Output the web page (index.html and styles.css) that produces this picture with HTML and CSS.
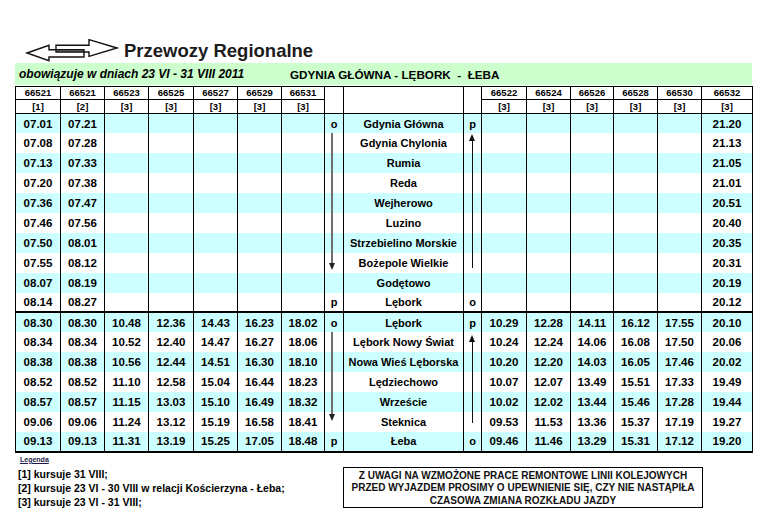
FILE: index.html
```html
<!DOCTYPE html>
<html lang="pl">
<head>
<meta charset="utf-8">
<title>Rozkład jazdy Gdynia Główna - Lębork - Łeba</title>
<link rel="stylesheet" href="styles.css">
</head>
<body>
<div class="page">
  <header class="brand">
    <svg class="logo" width="96" height="24" viewBox="0 0 96 24" aria-hidden="true">
      <rect x="32" y="11.7" width="28" height="2.3" fill="#9a9a9a"/>
      <path d="M3 15 L25 7.3 L25 11.7 L60 11.7 L60 19 L25 19 L25 22.7 Z" fill="none" stroke="#111" stroke-width="1.4" stroke-linejoin="miter"/>
      <path d="M93 10 L65 1.7 L65 7.3 L32 7.3 L32 14 L65 14 L65 18.3 Z" fill="none" stroke="#111" stroke-width="1.4" stroke-linejoin="miter"/>
    </svg>
    <span class="brand-name">Przewozy Regionalne</span>
  </header>

  <div class="route-bar">
    <span class="dates">obowiązuje w dniach 23 VI - 31 VIII 2011</span>
    <span class="route">GDYNIA GŁÓWNA - LĘBORK &nbsp;- &nbsp;ŁEBA</span>
  </div>

  <table class="timetable">
    <colgroup>
      <col class="c45"><col class="c44"><col class="c44"><col class="c45"><col class="c44"><col class="c44"><col class="c43">
      <col class="c19"><col class="c120"><col class="c18">
      <col class="c45"><col class="c44"><col class="c43"><col class="c44"><col class="c44"><col class="c51">
    </colgroup>
    <thead>
      <tr class="num">
        <th>66521</th><th>66521</th><th>66523</th><th>66525</th><th>66527</th><th>66529</th><th>66531</th>
        <th rowspan="2"></th><th rowspan="2"></th><th rowspan="2"></th>
        <th>66522</th><th>66524</th><th>66526</th><th>66528</th><th>66530</th><th>66532</th>
      </tr>
      <tr class="note">
        <th>[1]</th><th>[2]</th><th>[3]</th><th>[3]</th><th>[3]</th><th>[3]</th><th>[3]</th>
        <th>[3]</th><th>[3]</th><th>[3]</th><th>[3]</th><th>[3]</th><th>[3]</th>
      </tr>
    </thead>
    <tbody>
      <tr class="c"><td>07.01</td><td>07.21</td><td></td><td></td><td></td><td></td><td></td><td class="mk">o</td><td class="st">Gdynia Główna</td><td class="mk">p</td><td></td><td></td><td></td><td></td><td></td><td>21.20</td></tr>
      <tr><td>07.08</td><td>07.28</td><td></td><td></td><td></td><td></td><td></td><td class="mk anchor"><span class="down down-top"></span></td><td class="st">Gdynia Chylonia</td><td class="mk anchor"><span class="up up-top"></span></td><td></td><td></td><td></td><td></td><td></td><td>21.13</td></tr>
      <tr class="c"><td>07.13</td><td>07.33</td><td></td><td></td><td></td><td></td><td></td><td class="mk"></td><td class="st">Rumia</td><td class="mk"></td><td></td><td></td><td></td><td></td><td></td><td>21.05</td></tr>
      <tr><td>07.20</td><td>07.38</td><td></td><td></td><td></td><td></td><td></td><td class="mk"></td><td class="st">Reda</td><td class="mk"></td><td></td><td></td><td></td><td></td><td></td><td>21.01</td></tr>
      <tr class="c"><td>07.36</td><td>07.47</td><td></td><td></td><td></td><td></td><td></td><td class="mk"></td><td class="st">Wejherowo</td><td class="mk"></td><td></td><td></td><td></td><td></td><td></td><td>20.51</td></tr>
      <tr><td>07.46</td><td>07.56</td><td></td><td></td><td></td><td></td><td></td><td class="mk"></td><td class="st">Luzino</td><td class="mk"></td><td></td><td></td><td></td><td></td><td></td><td>20.40</td></tr>
      <tr class="c"><td>07.50</td><td>08.01</td><td></td><td></td><td></td><td></td><td></td><td class="mk"></td><td class="st">Strzebielino Morskie</td><td class="mk"></td><td></td><td></td><td></td><td></td><td></td><td>20.35</td></tr>
      <tr><td>07.55</td><td>08.12</td><td></td><td></td><td></td><td></td><td></td><td class="mk"></td><td class="st">Bożepole Wielkie</td><td class="mk"></td><td></td><td></td><td></td><td></td><td></td><td>20.31</td></tr>
      <tr class="c"><td>08.07</td><td>08.19</td><td></td><td></td><td></td><td></td><td></td><td class="mk"></td><td class="st">Godętowo</td><td class="mk"></td><td></td><td></td><td></td><td></td><td></td><td>20.19</td></tr>
      <tr><td>08.14</td><td>08.27</td><td></td><td></td><td></td><td></td><td></td><td class="mk">p</td><td class="st">Lębork</td><td class="mk">o</td><td></td><td></td><td></td><td></td><td></td><td>20.12</td></tr>

      <tr class="c split"><td>08.30</td><td>08.30</td><td>10.48</td><td>12.36</td><td>14.43</td><td>16.23</td><td>18.02</td><td class="mk">o</td><td class="st">Lębork</td><td class="mk">p</td><td>10.29</td><td>12.28</td><td>14.11</td><td>16.12</td><td>17.55</td><td>20.10</td></tr>
      <tr><td>08.34</td><td>08.34</td><td>10.52</td><td>12.40</td><td>14.47</td><td>16.27</td><td>18.06</td><td class="mk anchor"><span class="down down-bottom"></span></td><td class="st">Lębork Nowy Świat</td><td class="mk anchor"><span class="up up-bottom"></span></td><td>10.24</td><td>12.24</td><td>14.06</td><td>16.08</td><td>17.50</td><td>20.06</td></tr>
      <tr class="c"><td>08.38</td><td>08.38</td><td>10.56</td><td>12.44</td><td>14.51</td><td>16.30</td><td>18.10</td><td class="mk"></td><td class="st">Nowa Wieś Lęborska</td><td class="mk"></td><td>10.20</td><td>12.20</td><td>14.03</td><td>16.05</td><td>17.46</td><td>20.02</td></tr>
      <tr><td>08.52</td><td>08.52</td><td>11.10</td><td>12.58</td><td>15.04</td><td>16.44</td><td>18.23</td><td class="mk"></td><td class="st">Lędziechowo</td><td class="mk"></td><td>10.07</td><td>12.07</td><td>13.49</td><td>15.51</td><td>17.33</td><td>19.49</td></tr>
      <tr class="c"><td>08.57</td><td>08.57</td><td>11.15</td><td>13.03</td><td>15.10</td><td>16.49</td><td>18.32</td><td class="mk"></td><td class="st">Wrzeście</td><td class="mk"></td><td>10.02</td><td>12.02</td><td>13.44</td><td>15.46</td><td>17.28</td><td>19.44</td></tr>
      <tr><td>09.06</td><td>09.06</td><td>11.24</td><td>13.12</td><td>15.19</td><td>16.58</td><td>18.41</td><td class="mk"></td><td class="st">Steknica</td><td class="mk"></td><td>09.53</td><td>11.53</td><td>13.36</td><td>15.37</td><td>17.19</td><td>19.27</td></tr>
      <tr class="c"><td>09.13</td><td>09.13</td><td>11.31</td><td>13.19</td><td>15.25</td><td>17.05</td><td>18.48</td><td class="mk">p</td><td class="st">Łeba</td><td class="mk">o</td><td>09.46</td><td>11.46</td><td>13.29</td><td>15.31</td><td>17.12</td><td>19.20</td></tr>
    </tbody>
  </table>

  <div class="footer">
    <div class="legend">
      <div class="legend-title">Legenda</div>
      <p>[1] kursuje 31 VIII;</p>
      <p>[2] kursuje 23 VI - 30 VIII w relacji Kościerzyna - Łeba;</p>
      <p>[3] kursuje 23 VI - 31 VIII;</p>
    </div>
    <div class="notice">
      Z UWAGI NA WZMOŻONE PRACE REMONTOWE LINII KOLEJOWYCH<br>
      PRZED WYJAZDEM PROSIMY O UPEWNIENIE SIĘ, CZY NIE NASTĄPIŁA<br>
      CZASOWA ZMIANA ROZKŁADU JAZDY
    </div>
  </div>
</div>
</body>
</html>
```

FILE: styles.css
```css
* { box-sizing: border-box; }

body {
  margin: 0;
  background: #ffffff;
  color: #000;
  font-family: "Liberation Sans", Arial, sans-serif;
}

.page {
  width: 768px;
  padding: 38px 0 0 15px;
}

.brand {
  display: flex;
  align-items: center;
  height: 24px;
  margin-left: 9px;
  gap: 4px;
}

.logo { display: block; flex: 0 0 auto; }

.brand-name {
  font-size: 18.5px;
  font-weight: bold;
  color: #1c1c1c;
  line-height: 24px;
  position: relative;
  top: 1px;
}

.route-bar {
  margin-top: 1px;
  width: 737px;
  height: 22px;
  background: #ccffcc;
  display: flex;
  align-items: center;
  font-weight: bold;
  font-size: 12px;
}

.dates {
  flex: 0 0 275px;
  padding-left: 4px;
  font-style: italic;
}

.route { font-size: 11.7px; }

.timetable {
  margin-top: 1px;
  width: 737px;
  border-collapse: collapse;
  table-layout: fixed;
  border-top: 1px solid #000;
  border-bottom: 2px solid #000;
}

.c45 { width: 45px; }
.c44 { width: 44px; }
.c43 { width: 43px; }
.c19 { width: 19px; }
.c120 { width: 120px; }
.c18 { width: 18px; }
.c51 { width: 51px; }

.timetable th,
.timetable td {
  border-left: 1px solid #000;
  border-right: 1px solid #000;
  padding: 0;
  text-align: center;
  white-space: nowrap;
  font-weight: bold;
}

.timetable th {
  font-size: 9.5px;
  line-height: 12px;
}

.num th { height: 13px; border-bottom: 1px solid #000; }
.note th { height: 14px; border-bottom: 1px solid #000; }

.timetable td {
  height: 19.9px;
  font-size: 11.5px;
  line-height: 14px;
}

.timetable tr.c td { background: #ccffff; }

.timetable tr.split td { border-top: 2px solid #000; }

.timetable td.st { font-size: 11px; }

.timetable td.mk { font-size: 11px; }

.timetable td.anchor { position: relative; }

.down {
  position: absolute;
  z-index: 2;
  top: 0;
  left: 6px;
  width: 2px;
  background: #6e6e6e;
}
.down::after {
  content: "";
  position: absolute;
  bottom: -7px;
  left: -2.5px;
  border-left: 3.5px solid transparent;
  border-right: 3.5px solid transparent;
  border-top: 7px solid #222;
}
.down-top { height: 130px; }
.down-bottom { height: 82px; }

.up {
  position: absolute;
  z-index: 2;
  left: 8px;
  width: 1px;
  background: #111;
}
.up::before {
  content: "";
  position: absolute;
  top: -6px;
  left: -3px;
  border-left: 3.5px solid transparent;
  border-right: 3.5px solid transparent;
  border-bottom: 7px solid #111;
}
.up-top { top: 7px; height: 128px; }
.up-bottom { top: 9px; height: 82px; }

.footer {
  display: flex;
  align-items: flex-start;
}

.legend {
  flex: 0 0 328px;
  padding-left: 3px;
  padding-top: 2px;
}

.legend-title {
  font-size: 7px;
  font-weight: bold;
  text-decoration: underline;
  color: #1b1b4a;
  line-height: 9px;
  margin-left: 2px;
}

.legend p {
  margin: 0;
  font-size: 10.5px;
  font-weight: bold;
  line-height: 14px;
}
.legend p:first-of-type { margin-top: 3px; }

.notice {
  margin-top: 14px;
  width: 360px;
  height: 41px;
  border: 1px solid #000;
  text-align: center;
  font-size: 10px;
  font-weight: bold;
  line-height: 12.5px;
  padding-top: 2px;
  color: #111;
}
```
